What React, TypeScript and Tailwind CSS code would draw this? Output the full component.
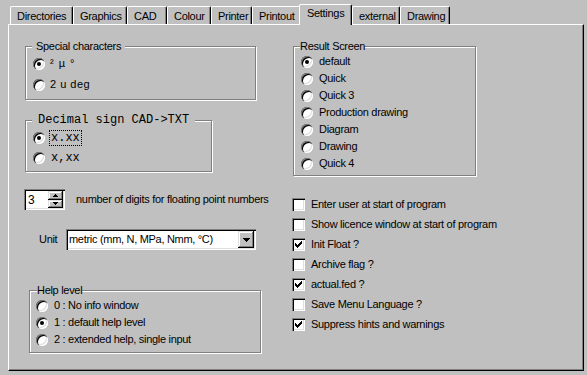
import React from "react";

const sunken =
  "shadow-[inset_1px_1px_0_#808080,inset_2px_2px_0_#000,inset_-1px_-1px_0_#fff,inset_-2px_-2px_0_#dfdfdf]";
const raised =
  "shadow-[inset_-1px_-1px_0_#000,inset_1px_1px_0_#dfdfdf,inset_-2px_-2px_0_#808080,inset_2px_2px_0_#fff]";
const etched = "border border-[#808080] shadow-[inset_1px_1px_0_#fff,1px_1px_0_#fff]";
const mono = "text-[12px] font-['Liberation_Mono','Courier_New',monospace] tracking-normal";

function Radio({ checked }: { checked?: boolean }) {
  return (
    <span
      className={`flex w-[12px] h-[12px] shrink-0 items-center justify-center rounded-full bg-white ${sunken}`}
    >
      {checked && <span className="w-[4px] h-[4px] rounded-full bg-black" />}
    </span>
  );
}

function Check({ checked }: { checked?: boolean }) {
  return (
    <span className={`flex w-[13px] h-[13px] shrink-0 items-center justify-center bg-white ${sunken}`}>
      {checked && (
        <svg width="7" height="7" viewBox="0 0 7 7" shapeRendering="crispEdges">
          <path
            d="M6 0h1v1h-1z M5 1h2v1h-2z M0 2h1v1h-1z M4 2h3v1h-3z M0 3h2v1h-2z M3 3h3v1h-3z M0 4h5v1h-5z M1 5h3v1h-3z M2 6h1v1h-1z"
            fill="#000"
          />
        </svg>
      )}
    </span>
  );
}

function Tab({ label, width, active }: { label: string; width: string; active?: boolean }) {
  if (active) {
    return (
      <div
        className={`relative z-10 -ml-[2px] -mb-[1px] h-[21px] ${width} shrink-0 rounded-t-[2px] border-t border-l border-r border-t-white border-l-white border-r-black bg-[#c0c0c0] pl-[7px] pt-[2px] leading-[13px] shadow-[inset_-1px_0_0_#808080]`}
      >
        {label}
      </div>
    );
  }
  return (
    <div
      className={`h-[18px] ${width} shrink-0 rounded-t-[2px] border-t border-l border-r border-t-white border-l-white border-r-black pl-[6px] pt-[3px] leading-[13px] shadow-[inset_-1px_0_0_#808080]`}
    >
      {label}
    </div>
  );
}

const results = ["default", "Quick", "Quick 3", "Production drawing", "Diagram", "Drawing", "Quick 4"];

const options: [string, boolean][] = [
  ["Enter user at start of program", false],
  ["Show licence window at start of program", false],
  ["Init Float ?", true],
  ["Archive flag ?", false],
  ["actual.fed ?", true],
  ["Save Menu Language ?", false],
  ["Suppress hints and warnings", true],
];

export default function App() {
  return (
    <div className="w-[587px] h-[375px] overflow-hidden bg-[#c0c0c0] text-[11px] tracking-[-0.3px] text-black font-['Liberation_Sans',Arial,sans-serif]">
      {/* Tabs */}
      <div className="flex h-[24px] items-end pl-[10px]">
        <Tab label="Directories" width="w-[63px]" />
        <Tab label="Graphics" width="w-[54px]" />
        <Tab label="CAD" width="w-[40px]" />
        <Tab label="Colour" width="w-[44px]" />
        <Tab label="Printer" width="w-[41px]" />
        <Tab label="Printout" width="w-[49px]" />
        <Tab label="Settings" width="w-[53px]" active />
        <Tab label="external" width="w-[48px]" />
        <Tab label="Drawing" width="w-[50px]" />
      </div>

      {/* Page */}
      <div className="ml-[8px] flex h-[347px] w-[576px] border-t border-l border-r border-b border-t-white border-l-white border-r-black border-b-black pl-[16px] shadow-[inset_-1px_-1px_0_#808080]">
        {/* Left column */}
        <div className="flex w-[267px] shrink-0 flex-col">
          <fieldset className={`mt-[15px] w-[231px] pb-[4px] ${etched}`}>
            <legend className="ml-[6px] bg-[#c0c0c0] px-[4px] leading-[13px]">Special characters</legend>
            <div className="flex h-[21px] items-center gap-[5px] pl-[7px]">
              <Radio checked />
              <span className="tracking-[1px]">² µ °</span>
            </div>
            <div className="flex h-[21px] items-center gap-[5px] pl-[7px]">
              <Radio />
              <span className="tracking-[0.5px]">2 u deg</span>
            </div>
          </fieldset>

          <fieldset className={`mt-[13px] w-[187px] pb-[3px] ${etched}`}>
            <legend className={`ml-[6px] bg-[#c0c0c0] px-[6px] leading-[15px] ${mono}`}>
              Decimal sign CAD-&gt;TXT
            </legend>
            <div className={`flex h-[20px] items-center gap-[4px] pl-[7px] ${mono}`}>
              <Radio checked />
              <span className="border border-dotted border-black px-[1px] leading-[14px]">x.xx</span>
            </div>
            <div className={`flex h-[20px] items-center gap-[4px] pl-[7px] ${mono}`}>
              <Radio />
              <span className="border border-transparent px-[1px] leading-[14px]">x,xx</span>
            </div>
          </fieldset>

          {/* Digits spinner */}
          <div className="mt-[17px] -ml-[1px] flex h-[21px] items-center gap-[11px]">
            <div className={`flex h-[21px] w-[41px] items-center justify-between bg-white py-[2px] pl-[4px] pr-[2px] ${sunken}`}>
              <span className="text-[12px]">3</span>
              <div className="flex h-full w-[15px] flex-col">
                <div className={`flex flex-1 items-center justify-center bg-[#c0c0c0] ${raised}`}>
                  <svg width="5" height="3" viewBox="0 0 5 3" shapeRendering="crispEdges">
                    <path d="M2 0h1v1h-1z M1 1h3v1h-3z M0 2h5v1h-5z" fill="#000" />
                  </svg>
                </div>
                <div className={`flex flex-1 items-center justify-center bg-[#c0c0c0] ${raised}`}>
                  <svg width="5" height="3" viewBox="0 0 5 3" shapeRendering="crispEdges">
                    <path d="M0 0h5v1h-5z M1 1h3v1h-3z M2 2h1v1h-1z" fill="#000" />
                  </svg>
                </div>
              </div>
            </div>
            <span>number of digits for floating point numbers</span>
          </div>

          {/* Unit combo */}
          <div className="mt-[19px] ml-[14px] flex h-[21px] items-center">
            <span className="w-[27px]">Unit</span>
            <div className={`flex h-[21px] w-[190px] items-center justify-between bg-white p-[2px] pl-[3px] ${sunken}`}>
              <span>metric (mm, N, MPa, Nmm, °C)</span>
              <div className={`flex h-[17px] w-[16px] items-center justify-center bg-[#c0c0c0] ${raised}`}>
                <svg width="7" height="4" viewBox="0 0 7 4" shapeRendering="crispEdges">
                  <path d="M0 0h7v1h-7z M1 1h5v1h-5z M2 2h3v1h-3z M3 3h1v1h-1z" fill="#000" />
                </svg>
              </div>
            </div>
          </div>

          <fieldset className={`mt-[34px] ml-[4px] w-[232px] pb-[4px] ${etched}`}>
            <legend className="ml-[7px] bg-[#c0c0c0] leading-[13px]">Help level</legend>
            <div className="flex h-[17px] items-center gap-[6px] pl-[6px]">
              <Radio />
              <span>0 : No info window</span>
            </div>
            <div className="flex h-[17px] items-center gap-[6px] pl-[6px]">
              <Radio checked />
              <span>1 : default help level</span>
            </div>
            <div className="flex h-[17px] items-center gap-[6px] pl-[6px]">
              <Radio />
              <span>2 : extended help, single input</span>
            </div>
          </fieldset>
        </div>

        {/* Right column */}
        <div className="flex flex-col">
          <fieldset className={`mt-[15px] ml-[1px] w-[183px] pb-[3px] ${etched}`}>
            <legend className="ml-[6px] bg-[#c0c0c0] leading-[13px]">Result Screen</legend>
            {results.map((r, i) => (
              <div key={r} className="flex h-[17px] items-center gap-[6px] pl-[7px]">
                <Radio checked={i === 0} />
                <span>{r}</span>
              </div>
            ))}
          </fieldset>

          <div className="mt-[18px] flex flex-col">
            {options.map(([label, on]) => (
              <div key={label} className="flex h-[20px] items-center gap-[6px]">
                <Check checked={on} />
                <span>{label}</span>
              </div>
            ))}
          </div>
        </div>
      </div>
    </div>
  );
}
